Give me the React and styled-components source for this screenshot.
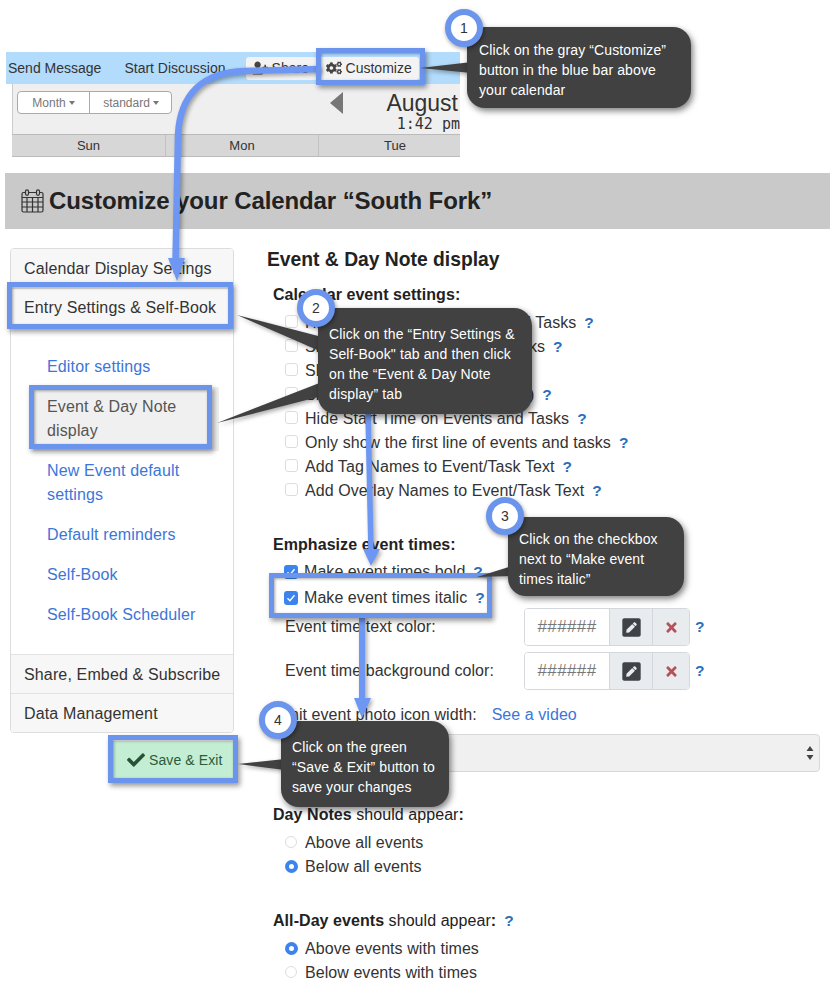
import React from 'react';
import styled, { createGlobalStyle } from 'styled-components';
import { FaCogs, FaCheck, FaTimes, FaPenSquare, FaUserPlus } from 'react-icons/fa';

const Global = createGlobalStyle`
  html, body { margin: 0; padding: 0; background: #fff; }
  body { font-family: "Liberation Sans", Arial, sans-serif; color: #333; }
`;

const Page = styled.div`
  position: relative;
  width: 830px;
  height: 993px;
  overflow: hidden;
  padding-top: 52px;
  box-sizing: border-box;
`;

/* ---- calendar strip ---- */
const Strip = styled.section`
  margin-left: 6px;
  width: 454px;
  overflow: hidden;
`;
const BlueBar = styled.div`
  height: 32px;
  background: #b3dbfb;
  display: flex;
  align-items: center;
  padding-left: 2px;
  font-size: 14px;
  color: #333;
`;
const BarLink = styled.span`
  margin-right: ${p => p.$gap}px;
  white-space: nowrap;
`;
const BarButton = styled.span`
  height: 23px;
  width: ${p => p.$w}px;
  flex: none;
  box-sizing: border-box;
  background: #f3f3f3;
  border-radius: 3px;
  display: inline-flex;
  align-items: center;
  gap: 4px;
  padding-left: ${p => p.$pad}px;
  color: #333;
  font-size: 14px;
  svg { font-size: 16px; color: #444; }
`;
const CalBody = styled.div`
  margin-left: 6px;
  border-left: 1px solid #ccc;
`;
const CalTools = styled.div`
  height: 50px;
  background: #efefef;
  display: flex;
  position: relative;
  padding-top: 7px;
  box-sizing: border-box;
`;
const ViewGroup = styled.div`
  margin-left: 4px;
  display: flex;
  height: 23px;
  width: 155px;
  box-sizing: border-box;
  background: #fff;
  border: 1px solid #aaa;
  border-radius: 4px;
  font-size: 12px;
  color: #777;
`;
const ViewBtn = styled.span`
  width: ${p => p.$w}px;
  flex: none;
  box-sizing: border-box;
  display: flex;
  align-items: center;
  justify-content: center;
  gap: 3px;
  & + & { border-left: 1px solid #aaa; }
  &::after {
    content: "";
    border-left: 3.5px solid transparent;
    border-right: 3.5px solid transparent;
    border-top: 4px solid #777;
  }
`;
const PrevArrow = styled.span`
  margin-left: 158px;
  margin-top: 1px;
  width: 0;
  height: 0;
  border-top: 11px solid transparent;
  border-bottom: 11px solid transparent;
  border-right: 13px solid #777;
`;
const CalTitle = styled.div`
  margin-left: 45px;
  margin-top: -1px;
  display: flex;
  flex-direction: column;
  align-items: flex-end;
  width: 72px;
  flex: none;
`;
const Month = styled.span`
  font-size: 23px;
  line-height: 26px;
  color: #333;
  margin-right: 2px;
`;
const Clock = styled.span`
  font-family: "DejaVu Sans Mono", monospace;
  font-size: 15px;
  line-height: 18px;
  margin-top: -1px;
  color: #333;
  white-space: nowrap;
`;
const DayRow = styled.div`
  display: grid;
  grid-template-columns: 153px 153px 153px;
  height: 23px;
  background: #d7d7d7;
  border-top: 1px solid #bbb;
  border-bottom: 1px solid #bbb;
  box-sizing: border-box;
  margin-left: -1px;
`;
const DayCell = styled.div`
  text-align: center;
  font-size: 13px;
  line-height: 21px;
  color: #333;
  & + & { border-left: 1px solid #c2c2c2; }
`;

/* ---- heading band ---- */
const Band = styled.header`
  margin: 16px 0 19px 5px;
  height: 56px;
  background: #c9c9c9;
  display: flex;
  align-items: center;
  padding-left: 16px;
  gap: 5px;
`;
const BandTitle = styled.h1`
  margin: 0;
  font-size: 24px;
  font-weight: 700;
  letter-spacing: -0.1px;
  color: #222;
  white-space: nowrap;
`;

/* ---- columns ---- */
const Columns = styled.div`
  display: flex;
  align-items: flex-start;
`;
const LeftCol = styled.aside`
  margin-left: 10px;
  width: 224px;
  flex: none;
  display: flex;
  flex-direction: column;
  letter-spacing: 0.14px;
`;
const SideBox = styled.nav`
  border: 1px solid #ddd;
  border-radius: 4px;
  box-sizing: border-box;
  height: 485px;
  overflow: hidden;
  display: flex;
  flex-direction: column;
`;
const Tab = styled.div`
  height: ${p => p.$h}px;
  flex: none;
  box-sizing: border-box;
  background: #f7f7f7;
  padding: ${p => p.$pt || 0}px 0 0 13px;
  display: flex;
  align-items: center;
  font-size: 16px;
  color: #333;
  border-top: ${p => (p.$line ? '1px solid #e2e2e2' : '0')};
`;
const SubPanel = styled.div`
  flex: 1;
  background: #fff;
  padding: 19px 14px 0 22px;
  border-top: 1px solid #e2e2e2;
`;
const SubItem = styled.div`
  padding: 8px 14px;
  font-size: 16px;
  line-height: 24px;
  color: ${p => (p.$active ? '#555' : '#3b76d9')};
  background: ${p => (p.$active ? '#f0f0f0' : 'transparent')};
`;
const SaveBtn = styled.button`
  margin: 8px 0 0 103px;
  width: 120px;
  height: 38px;
  border: 0;
  background: #c3eed3;
  color: #2c5a3c;
  font: 14px "Liberation Sans", Arial, sans-serif;
  letter-spacing: 0.1px;
  display: flex;
  align-items: center;
  gap: 4px;
  padding: 0 0 0 14px;
  svg { font-size: 18px; color: #24533a; }
`;

const Main = styled.main`
  margin-left: 33px;
  flex: 1;
  letter-spacing: 0.06px;
`;
const MainTitle = styled.h2`
  margin: 0 0 11px;
  font-size: 19.3px;
  line-height: 24px;
  font-weight: 700;
  letter-spacing: 0;
  color: #222;
`;
const Group = styled.div`
  padding-left: 6px;
  margin-top: ${p => p.$mt || 0}px;
`;
const GroupLabel = styled.div`
  font-size: 16px;
  line-height: 24px;
  color: #222;
  margin-bottom: ${p => p.$mb ?? 4}px;
  b { font-weight: 700; }
`;
const Option = styled.label`
  display: flex;
  align-items: center;
  height: ${p => p.$h || 24}px;
  padding-left: 12px;
  font-size: 16px;
  color: #333;
  white-space: nowrap;
`;
const Box = styled.span`
  width: ${p => (p.$on ? 14 : 13)}px;
  height: ${p => (p.$on ? 14 : 13)}px;
  margin: ${p => (p.$on ? '0 6px 0 -1px' : '-4px 7px 0 0')};
  flex: none;
  box-sizing: border-box;
  border-radius: 3px;
  border: ${p => (p.$on ? '0' : '1px solid #ddd')};
  background: ${p => (p.$on ? '#3b84ee' : '#fff')};
  display: inline-flex;
  align-items: center;
  justify-content: center;
`;
const Radio = styled.span`
  width: ${p => (p.$on ? 13 : 12)}px;
  height: ${p => (p.$on ? 13 : 12)}px;
  margin: -2px ${p => (p.$on ? 7 : 8)}px 0 0;
  flex: none;
  box-sizing: border-box;
  border-radius: 50%;
  border: ${p => (p.$on ? '4px solid #3b84ee' : '1px solid #ddd')};
  background: #fff;
`;
const Help = styled.span`
  color: #2a6fbd;
  font-weight: 700;
  font-size: 15.5px;
  margin-left: ${p => p.$ml || 8}px;
`;
const ColorRow = styled.div`
  display: flex;
  align-items: center;
  height: 38px;
  padding-left: 12px;
  margin-top: ${p => p.$mt}px;
  font-size: 16px;
  color: #333;
`;
const ColorLabel = styled.span`
  width: 239px;
  flex: none;
`;
const InputGroup = styled.div`
  display: flex;
  width: 166px;
  height: 38px;
  flex: none;
  box-sizing: border-box;
  border: 1px solid #d4d8dd;
  border-radius: 4px;
  overflow: hidden;
`;
const HexField = styled.span`
  width: 84px;
  flex: none;
  background: #fff;
  color: #777;
  font-size: 17px;
  letter-spacing: 0.4px;
  display: flex;
  align-items: center;
  justify-content: center;
`;
const AddOn = styled.span`
  width: ${p => p.$w}px;
  flex: none;
  box-sizing: border-box;
  background: #e9ecef;
  border-left: 1px solid #d4d8dd;
  display: flex;
  align-items: center;
  justify-content: center;
  color: ${p => p.$c};
  font-size: ${p => p.$s}px;
`;
const LimitRow = styled.div`
  margin-top: 13px;
  height: 24px;
  display: flex;
  align-items: center;
  font-size: 16px;
  color: #333;
`;
const VideoLink = styled.span`
  color: #3b76d9;
  margin-left: 15px;
`;
const SelectBar = styled.div`
  margin: 7px 10px 0 12px;
  height: 38px;
  box-sizing: border-box;
  background: #f0f0f0;
  border: 1px solid #d8d8d8;
  border-radius: 4px;
  display: flex;
  align-items: center;
  justify-content: flex-end;
  padding-right: 4px;
`;

/* ---- annotation overlays ---- */
const Overlay = styled.svg`
  position: absolute;
  left: 0;
  top: 0;
  pointer-events: none;
  overflow: visible;
  filter: drop-shadow(2px 2px 2px rgba(0, 0, 0, 0.35));
`;
const Highlight = styled.div`
  position: absolute;
  left: ${p => p.$x}px;
  top: ${p => p.$y}px;
  width: ${p => p.$w}px;
  height: ${p => p.$h}px;
  box-sizing: border-box;
  border: 5px solid #6b94ec;
  box-shadow: 2px 3px 5px rgba(0, 0, 0, 0.4), inset 1px 1px 3px rgba(0, 0, 0, 0.35);
`;
const Callout = styled.div`
  position: absolute;
  left: ${p => p.$x}px;
  top: ${p => p.$y}px;
  width: ${p => p.$w}px;
  height: ${p => p.$h}px;
  box-sizing: border-box;
  padding: ${p => p.$pt}px 0 0 ${p => p.$pl}px;
  background: #414141;
  border-radius: 18px;
  color: #fff;
  font-size: 14px;
  letter-spacing: 0.12px;
  line-height: 20px;
  box-shadow: 2px 3px 6px rgba(0, 0, 0, 0.5);
  white-space: pre-line;
`;
const Badge = styled.div`
  position: absolute;
  left: ${p => p.$x - 19}px;
  top: ${p => p.$y - 19}px;
  width: 38px;
  height: 38px;
  box-sizing: border-box;
  border-radius: 50%;
  border: 6px solid #6b94ec;
  background: #fff;
  color: #333;
  font-size: 14px;
  display: flex;
  align-items: center;
  justify-content: center;
  box-shadow: 1px 2px 4px rgba(0, 0, 0, 0.4);
`;

const CalendarIcon = () => (
  <svg width="23" height="24" viewBox="0 0 23 24" fill="none" stroke="#333" strokeWidth="1.2">
    <rect x="1" y="3.5" width="21" height="19.5" rx="1.5" />
    <path d="M1 8.5h21M1 13h21M1 18h21M6 8.5V23M11.5 8.5V23M17 8.5V23" />
    <rect x="4.5" y="0.8" width="3" height="5.5" rx="1.5" fill="#c9c9c9" />
    <rect x="15.5" y="0.8" width="3" height="5.5" rx="1.5" fill="#c9c9c9" />
  </svg>
);

const Tick = () => (
  <svg width="10" height="10" viewBox="0 0 10 10" fill="none" stroke="#fff" strokeWidth="1.4">
    <path d="M1.5 5.2l2.4 2.6 4.6-5.6" />
  </svg>
);

const Updown = () => (
  <svg width="10" height="16" viewBox="0 0 10 16" fill="#444">
    <path d="M5 1l3.5 5h-7zM5 15L1.5 10h7z" />
  </svg>
);

const checks = [
  ['Hide Description on Events and Tasks', true],
  ['Simple Titles of Events and Tasks', true],
  ['Show Event Duration', false],
  ['Show Numbers on Events (UID)', true],
  ['Hide Start Time on Events and Tasks', true],
  ['Only show the first line of events and tasks', true],
  ['Add Tag Names to Event/Task Text', true],
  ['Add Overlay Names to Event/Task Text', true],
];

export default function App() {
  return (
    <>
      <Global />
      <Page>
        <Strip>
          <BlueBar>
            <BarLink $gap={23}>Send Message</BarLink>
            <BarLink $gap={20}>Start Discussion</BarLink>
            <BarButton $w={71} $pad={6}><FaUserPlus />Share</BarButton>
            <BarButton $w={102} $pad={9}><FaCogs />Customize</BarButton>
          </BlueBar>
          <CalBody>
            <CalTools>
              <ViewGroup>
                <ViewBtn $w={71}>Month</ViewBtn>
                <ViewBtn $w={83}>standard</ViewBtn>
              </ViewGroup>
              <PrevArrow />
              <CalTitle>
                <Month>August</Month>
                <Clock>1:42 pm</Clock>
              </CalTitle>
            </CalTools>
            <DayRow>
              <DayCell>Sun</DayCell>
              <DayCell>Mon</DayCell>
              <DayCell>Tue</DayCell>
            </DayRow>
          </CalBody>
        </Strip>

        <Band>
          <CalendarIcon />
          <BandTitle>Customize your Calendar “South Fork”</BandTitle>
        </Band>

        <Columns>
          <LeftCol>
            <SideBox>
              <Tab $h={39}>Calendar Display Settings</Tab>
              <Tab $h={39} $line>Entry Settings &amp; Self-Book</Tab>
              <SubPanel>
                <SubItem>Editor settings</SubItem>
                <SubItem $active>Event &amp; Day Note display</SubItem>
                <SubItem>New Event default settings</SubItem>
                <SubItem>Default reminders</SubItem>
                <SubItem>Self-Book</SubItem>
                <SubItem>Self-Book Scheduler</SubItem>
              </SubPanel>
              <Tab $h={39} $line $pt={2}>Share, Embed &amp; Subscribe</Tab>
              <Tab $h={39} $line $pt={2}>Data Management</Tab>
            </SideBox>
            <SaveBtn><FaCheck />Save &amp; Exit</SaveBtn>
          </LeftCol>

          <Main>
            <MainTitle>Event &amp; Day Note display</MainTitle>

            <Group>
              <GroupLabel><b>Calendar event settings:</b></GroupLabel>
              {checks.map(([t, h]) => (
                <Option key={t}>
                  <Box />{t}{h && <Help>?</Help>}
                </Option>
              ))}
            </Group>

            <Group $mt={30}>
              <GroupLabel $mb={2}><b>Emphasize event times:</b></GroupLabel>
              <Option $h={26}><Box $on><Tick /></Box>Make event times bold<Help>?</Help></Option>
              <Option $h={26}><Box $on><Tick /></Box>Make event times italic<Help>?</Help></Option>
            </Group>

            <Group>
              <ColorRow $mt={-3}>
                <ColorLabel>Event time text color:</ColorLabel>
                <InputGroup>
                  <HexField>######</HexField>
                  <AddOn $w={43} $c="#3f4348" $s={21}><FaPenSquare /></AddOn>
                  <AddOn $w={37} $c="#b4525a" $s={15}><FaTimes /></AddOn>
                </InputGroup>
                <Help $ml={5}>?</Help>
              </ColorRow>
              <ColorRow $mt={6}>
                <ColorLabel>Event time background color:</ColorLabel>
                <InputGroup>
                  <HexField>######</HexField>
                  <AddOn $w={43} $c="#3f4348" $s={21}><FaPenSquare /></AddOn>
                  <AddOn $w={37} $c="#b4525a" $s={15}><FaTimes /></AddOn>
                </InputGroup>
                <Help $ml={5}>?</Help>
              </ColorRow>
              <LimitRow>Limit event photo icon width:<VideoLink>See a video</VideoLink></LimitRow>
              <SelectBar><Updown /></SelectBar>
            </Group>

            <Group $mt={31}>
              <GroupLabel><b>Day Notes</b> should appear<b>:</b></GroupLabel>
              <Option><Radio />Above all events</Option>
              <Option><Radio $on />Below all events</Option>
            </Group>

            <Group $mt={30}>
              <GroupLabel><b>All-Day events</b> should appear<b>:</b><Help>?</Help></GroupLabel>
              <Option><Radio $on />Above events with times</Option>
              <Option><Radio />Below events with times</Option>
            </Group>
          </Main>
        </Columns>

        {/* arrows */}
        <Overlay width="830" height="993" viewBox="0 0 830 993">
          <g fill="none" stroke="#6d97f2" strokeWidth="6.5">
            <path d="M320 69L245 71C202 72 180 95 178 135L175.5 262" />
            <path d="M368 412L371 552" strokeWidth="5.5" />
            <path d="M362 616V702" strokeWidth="6" />
          </g>
          <g fill="#6d97f2">
            <polygon points="168,258 185,258 177,281" />
            <polygon points="363,549 380,549 371,566" />
            <polygon points="354,698 371,698 362,718" />
          </g>
        </Overlay>

        <Highlight $x={316} $y={48} $w={109} $h={37} />
        <Highlight $x={7} $y={282} $w={226} $h={47} />
        <Highlight $x={29} $y={385} $w={183} $h={64} />
        <Highlight $x={269} $y={573} $w={223} $h={45} />
        <Highlight $x={108} $y={735} $w={130} $h={48} />

        {/* callout tails */}
        <Overlay width="830" height="993" viewBox="0 0 830 993">
          <g fill="#414141">
            <polygon points="420,68 472,62 472,73" />
            <polygon points="237,315 322,337 322,352" />
            <polygon points="217,423 322,382 322,396" />
            <polygon points="477,577 512,566 512,576" />
            <polygon points="238,764 285,759 285,770" />
          </g>
        </Overlay>

        <Callout $x={467} $y={27} $w={224} $h={81} $pt={13} $pl={12}>
          {'Click on the gray “Customize”\nbutton in the blue bar above\nyour calendar'}
        </Callout>
        <Callout $x={318} $y={308} $w={214} $h={106} $pt={16} $pl={11}>
          {'Click on the “Entry Settings &\nSelf-Book" tab and then click\non the “Event & Day Note\ndisplay” tab'}
        </Callout>
        <Callout $x={508} $y={517} $w={176} $h={79} $pt={12} $pl={11}>
          {'Click on the checkbox\nnext to “Make event\ntimes italic”'}
        </Callout>
        <Callout $x={281} $y={721} $w={168} $h={86} $pt={16} $pl={11}>
          {'Click on the green\n“Save & Exit” button to\nsave your changes'}
        </Callout>

        <Badge $x={464} $y={28}>1</Badge>
        <Badge $x={316} $y={308}>2</Badge>
        <Badge $x={505} $y={516}>3</Badge>
        <Badge $x={278} $y={720}>4</Badge>
      </Page>
    </>
  );
}
